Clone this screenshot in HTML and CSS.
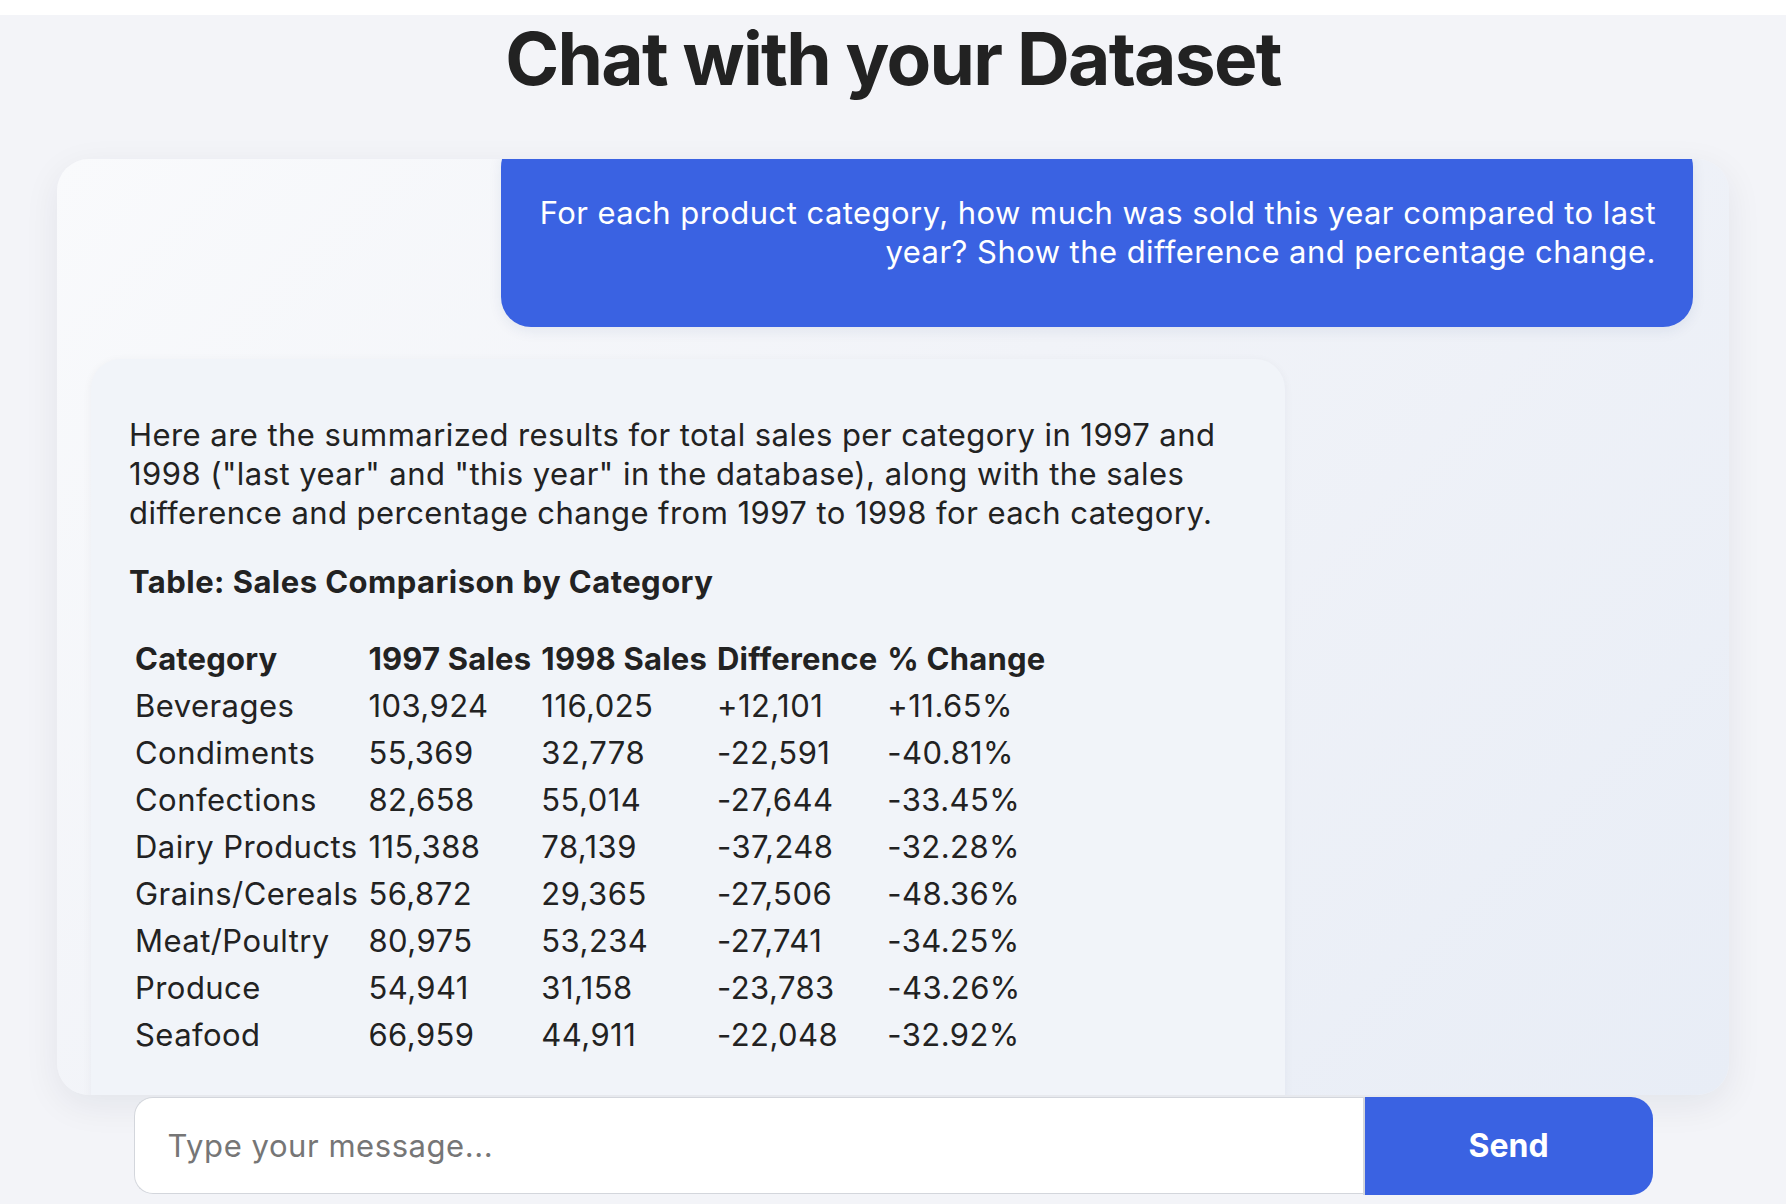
FILE: index.html
```html
<!DOCTYPE html>
<html lang="en">
<head>
<meta charset="utf-8">
<title>Chat with your Dataset</title>
<link rel="stylesheet" href="styles.css">
</head>
<body>
<div class="app">
  <h1 class="title">Chat with your Dataset</h1>
  <div class="chat-card">
    <div class="messages">
      <div class="msg msg-user">
        <p>For each product category, how much was sold this year compared to last year? Show the difference and percentage change.</p>
      </div>
      <div class="msg msg-bot">
        <p>Here are the summarized results for total sales per category in 1997 and 1998 ("last year" and "this year" in the database), along with the sales difference and percentage change from 1997 to 1998 for each category.</p>
        <p><strong>Table: Sales Comparison by Category</strong></p>
        <table class="data">
          <thead>
            <tr><th>Category</th><th>1997 Sales</th><th>1998 Sales</th><th>Difference</th><th>% Change</th></tr>
          </thead>
          <tbody>
            <tr><td>Beverages</td><td>103,924</td><td>116,025</td><td>+12,101</td><td>+11.65%</td></tr>
            <tr><td>Condiments</td><td>55,369</td><td>32,778</td><td>-22,591</td><td>-40.81%</td></tr>
            <tr><td>Confections</td><td>82,658</td><td>55,014</td><td>-27,644</td><td>-33.45%</td></tr>
            <tr><td>Dairy Products</td><td>115,388</td><td>78,139</td><td>-37,248</td><td>-32.28%</td></tr>
            <tr><td>Grains/Cereals</td><td>56,872</td><td>29,365</td><td>-27,506</td><td>-48.36%</td></tr>
            <tr><td>Meat/Poultry</td><td>80,975</td><td>53,234</td><td>-27,741</td><td>-34.25%</td></tr>
            <tr><td>Produce</td><td>54,941</td><td>31,158</td><td>-23,783</td><td>-43.26%</td></tr>
            <tr><td>Seafood</td><td>66,959</td><td>44,911</td><td>-22,048</td><td>-32.92%</td></tr>
          </tbody>
        </table>
      </div>
    </div>
  </div>
  <form class="composer">
    <input class="composer-input" type="text" placeholder="Type your message...">
    <button class="composer-send" type="button">Send</button>
  </form>
</div>
</body>
</html>
```

FILE: styles.css
```css
html, body {
  margin: 0;
  padding: 0;
  background: #ffffff;
}

body {
  font-family: "Inter", "Noto Sans", sans-serif;
  color: #222222;
  padding-top: 15px;
}

.app {
  background: #f3f4f8;
  min-height: 1189px;
  display: flex;
  flex-direction: column;
  align-items: center;
}

.title {
  margin: 0;
  font-size: 73px;
  line-height: 1.2;
  font-weight: 700;
  color: #222222;
  letter-spacing: -1.7px;
}

.chat-card {
  margin-top: 56px;
  width: 1672px;
  height: 936px;
  border-radius: 32px;
  overflow: hidden;
  background: linear-gradient(135deg, #f9fafc 0%, #f1f3f8 45%, #e8edf6 100%);
  box-shadow: 0 10px 36px rgba(20, 30, 60, 0.07);
}

.messages {
  margin-top: -22px;
  padding: 0 36px;
  display: flex;
  flex-direction: column;
  gap: 32px;
}

.msg {
  width: 1192px;
  box-sizing: border-box;
  padding: 26px 37px;
  border-radius: 30px;
  font-size: 31px;
  line-height: 39px;
  letter-spacing: 0.45px;
}

.msg p {
  margin: 30px 0;
}

.msg-user {
  align-self: flex-end;
  background: #3a62e2;
  color: #ffffff;
  text-align: right;
  box-shadow: 0 4px 14px rgba(30, 50, 120, 0.08);
}

.msg-bot {
  align-self: flex-start;
  margin-left: -2px;
  width: 1194px;
  padding: 26px 38px 60px;
  background: #f1f4f9;
  color: #222222;
  box-shadow: 0 2px 10px rgba(20, 30, 60, 0.05);
}

.msg-bot strong {
  font-weight: 700;
}

.data {
  border-spacing: 2px;
  margin: 33px 0 30px;
  font-size: 31px;
  line-height: 39px;
}

.data th,
.data td {
  padding: 3px 4px;
  text-align: left;
  white-space: nowrap;
}

.data th {
  font-weight: 700;
  letter-spacing: 0.2px;
}

.composer {
  margin: 2px 0 0;
  width: 1519px;
  display: flex;
  height: 98px;
}

.composer-input {
  flex: 1;
  box-sizing: border-box;
  height: 97px;
  margin: 0;
  border: 1.5px solid #d3d6dc;
  border-right: none;
  border-radius: 19px 0 0 19px;
  background: #ffffff;
  padding: 0 33px;
  font-family: "Inter", "Noto Sans", sans-serif;
  font-size: 31px;
  letter-spacing: 0.55px;
  color: #222222;
  outline: none;
}

.composer-input::placeholder {
  color: #767676;
}

.composer-send {
  width: 290px;
  height: 98px;
  margin: 0;
  border: none;
  border-left: 2px solid #d3d6dc;
  border-radius: 0 22px 22px 0;
  background: #3a62e2;
  color: #ffffff;
  font-family: "Inter", "Noto Sans", sans-serif;
  font-size: 32px;
  font-weight: 700;
  cursor: pointer;
}
```
